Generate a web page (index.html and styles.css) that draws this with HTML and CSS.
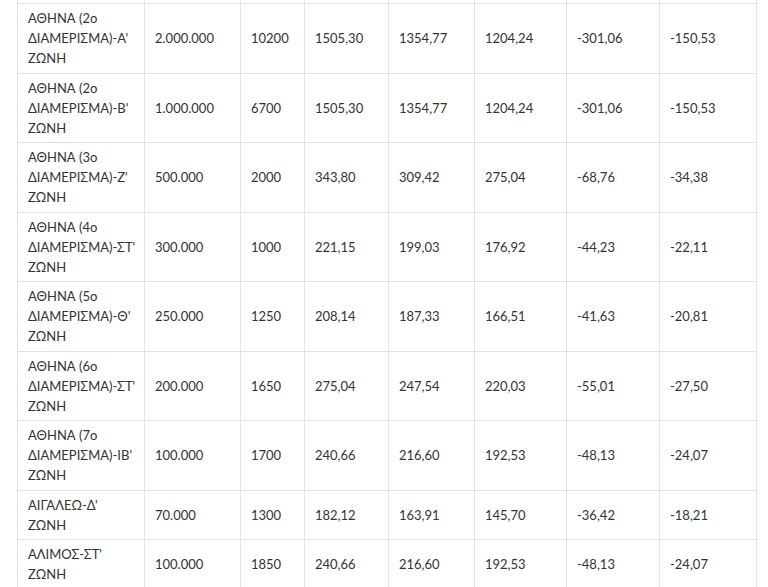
FILE: index.html
```html
<!DOCTYPE html>
<html lang="el">
<head>
<meta charset="utf-8">
<title>Πίνακας</title>
<link rel="stylesheet" href="styles.css">
</head>
<body>
<div class="wrap">
<table class="data">
<colgroup>
<col class="c1"><col class="c2"><col class="c3"><col class="c4"><col class="c5"><col class="c6"><col class="c7"><col class="c8">
</colgroup>
<tbody>
<tr class="cut"><td></td><td></td><td></td><td></td><td></td><td></td><td></td><td></td></tr>
<tr><td>ΑΘΗΝΑ (2ο <span class="nw">ΔΙΑΜΕΡΙΣΜΑ)-Α'</span> ΖΩΝΗ</td><td>2.000.000</td><td>10200</td><td>1505,30</td><td>1354,77</td><td>1204,24</td><td>-301,06</td><td>-150,53</td></tr>
<tr><td>ΑΘΗΝΑ (2ο <span class="nw">ΔΙΑΜΕΡΙΣΜΑ)-Β'</span> ΖΩΝΗ</td><td>1.000.000</td><td>6700</td><td>1505,30</td><td>1354,77</td><td>1204,24</td><td>-301,06</td><td>-150,53</td></tr>
<tr><td>ΑΘΗΝΑ (3ο <span class="nw">ΔΙΑΜΕΡΙΣΜΑ)-Ζ'</span> ΖΩΝΗ</td><td>500.000</td><td>2000</td><td>343,80</td><td>309,42</td><td>275,04</td><td>-68,76</td><td>-34,38</td></tr>
<tr><td>ΑΘΗΝΑ (4ο <span class="nw">ΔΙΑΜΕΡΙΣΜΑ)-ΣΤ'</span> ΖΩΝΗ</td><td>300.000</td><td>1000</td><td>221,15</td><td>199,03</td><td>176,92</td><td>-44,23</td><td>-22,11</td></tr>
<tr><td>ΑΘΗΝΑ (5ο <span class="nw">ΔΙΑΜΕΡΙΣΜΑ)-Θ'</span> ΖΩΝΗ</td><td>250.000</td><td>1250</td><td>208,14</td><td>187,33</td><td>166,51</td><td>-41,63</td><td>-20,81</td></tr>
<tr><td>ΑΘΗΝΑ (6ο <span class="nw">ΔΙΑΜΕΡΙΣΜΑ)-ΣΤ'</span> ΖΩΝΗ</td><td>200.000</td><td>1650</td><td>275,04</td><td>247,54</td><td>220,03</td><td>-55,01</td><td>-27,50</td></tr>
<tr><td>ΑΘΗΝΑ (7ο <span class="nw">ΔΙΑΜΕΡΙΣΜΑ)-ΙΒ'</span> ΖΩΝΗ</td><td>100.000</td><td>1700</td><td>240,66</td><td>216,60</td><td>192,53</td><td>-48,13</td><td>-24,07</td></tr>
<tr><td>ΑΙΓΑΛΕΩ-Δ' ΖΩΝΗ</td><td>70.000</td><td>1300</td><td>182,12</td><td>163,91</td><td>145,70</td><td>-36,42</td><td>-18,21</td></tr>
<tr><td>ΑΛΙΜΟΣ-ΣΤ' ΖΩΝΗ</td><td>100.000</td><td>1850</td><td>240,66</td><td>216,60</td><td>192,53</td><td>-48,13</td><td>-24,07</td></tr>
</tbody>
</table>
</div>
</body>
</html>
```
FILE: styles.css
```css
html, body {
  margin: 0;
  padding: 0;
  background: #fff;
}
.wrap {
  padding-left: 17px;
}
.data {
  border-collapse: collapse;
  table-layout: fixed;
  width: 739px;
  font-family: "Lato", "Open Sans", "Noto Sans", sans-serif;
  font-size: 13px;
  line-height: 20px;
  color: #333;
}
.c1 { width: 127px; }
.c2 { width: 96px; }
.c3 { width: 64px; }
.c4 { width: 84px; }
.c5 { width: 86px; }
.c6 { width: 92px; }
.c7 { width: 93px; }
.c8 { width: 97px; }
.data td {
  border: 1px solid #e3e3e3;
  padding: 4.25px 10px;
  vertical-align: middle;
  text-align: left;
}
.data .cut td {
  height: 3px;
  padding: 0;
  border-top: none;
}
.nw {
  white-space: nowrap;
}
```
